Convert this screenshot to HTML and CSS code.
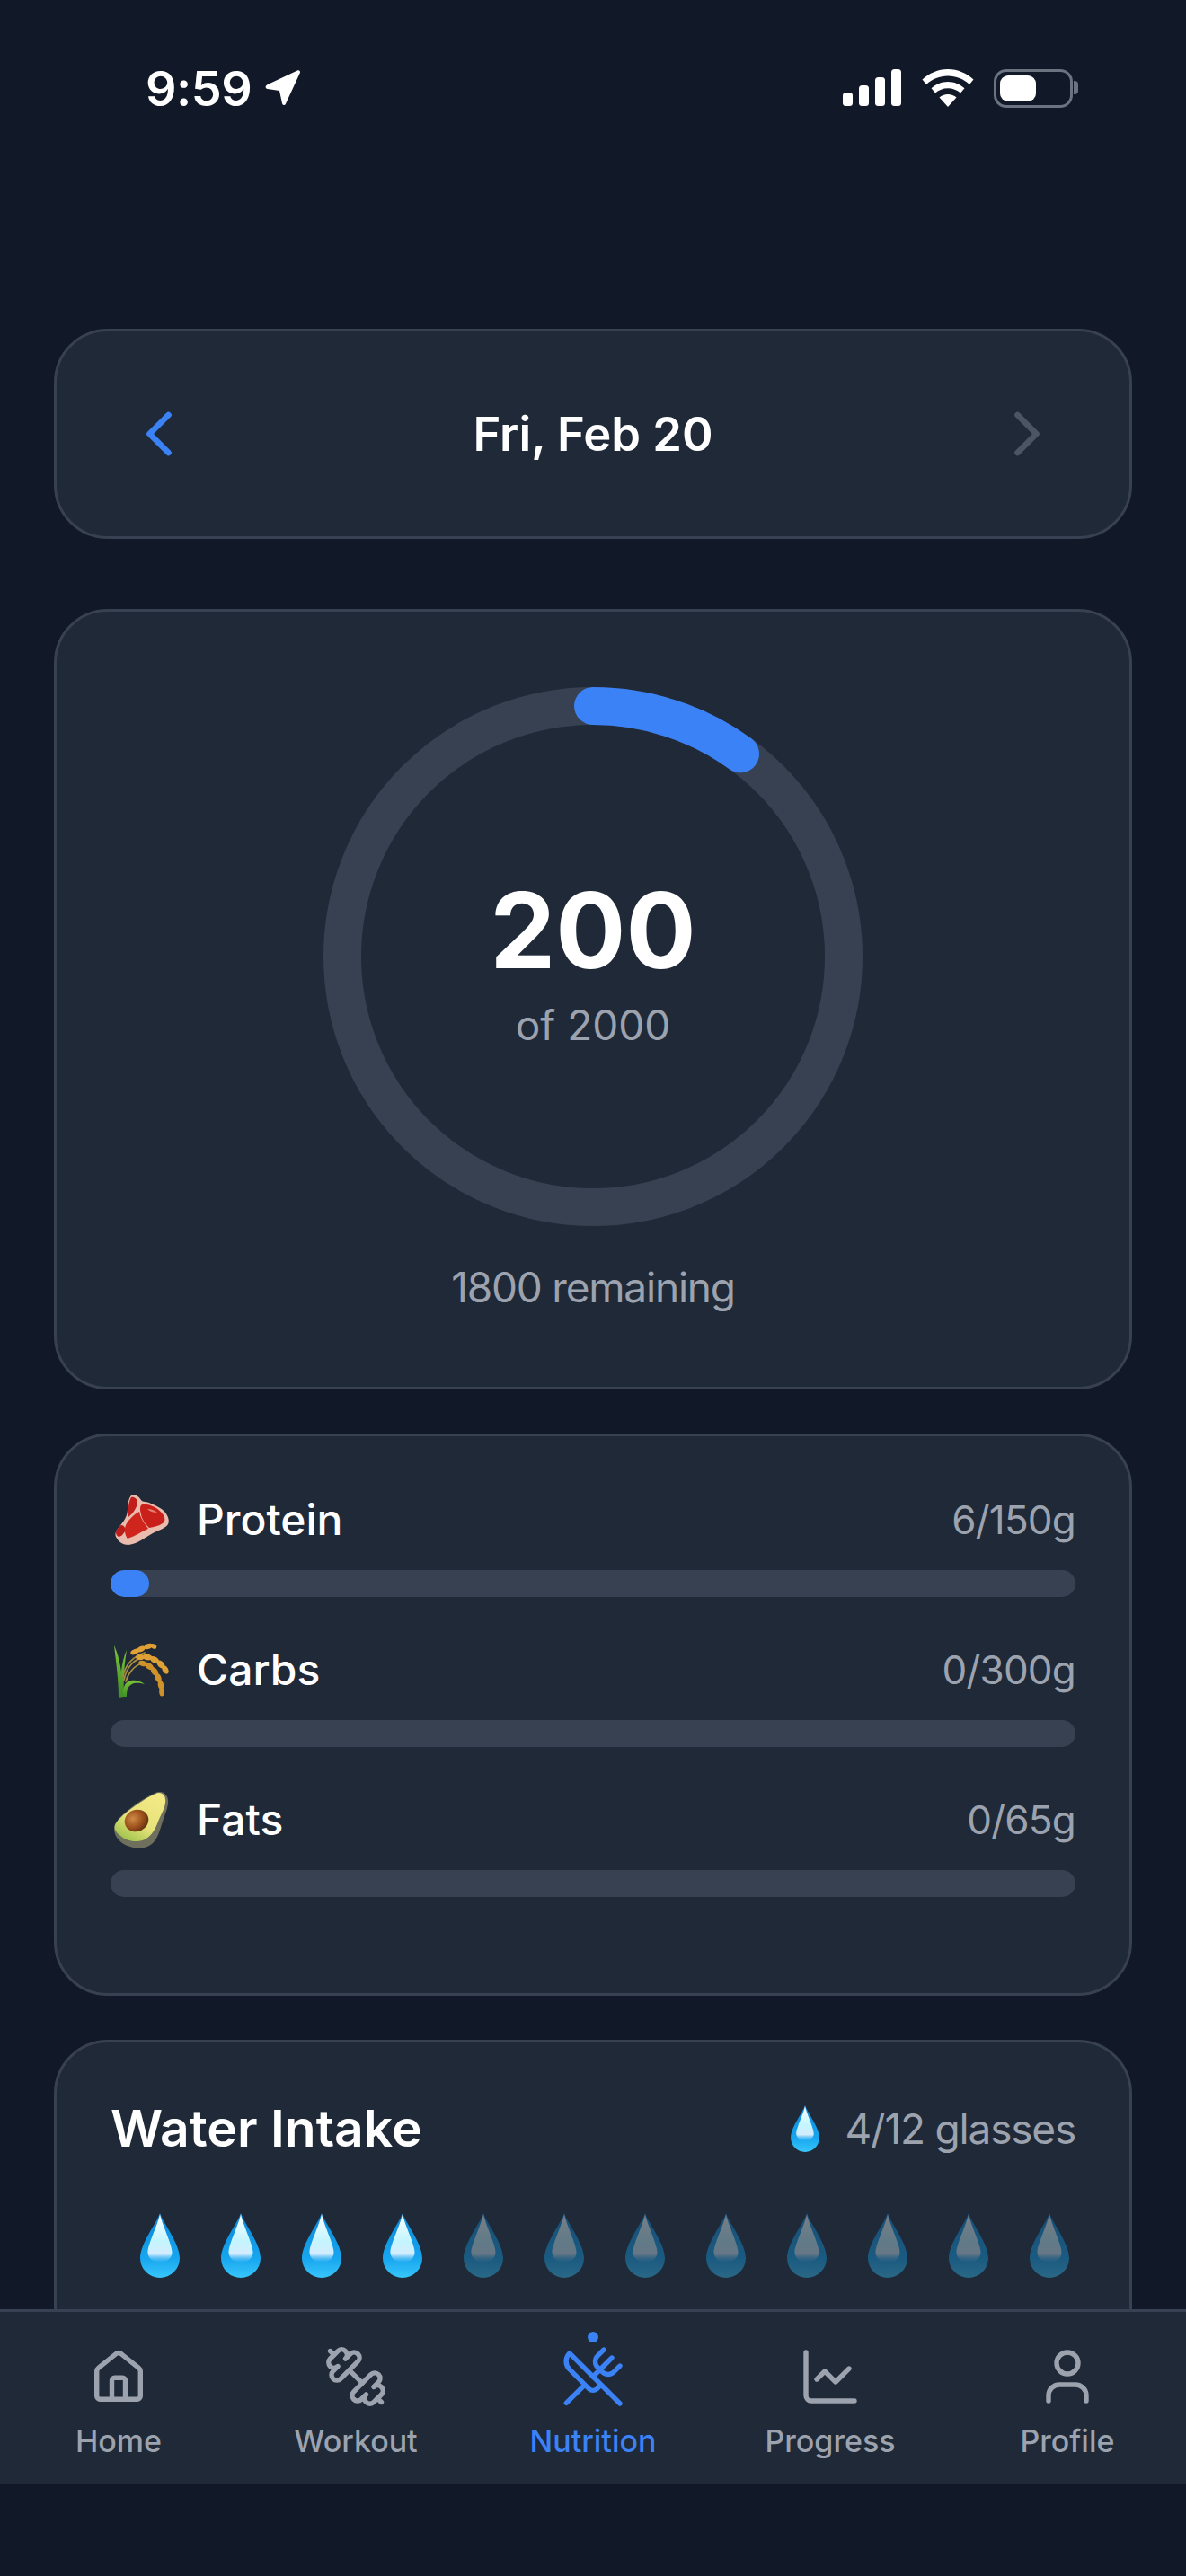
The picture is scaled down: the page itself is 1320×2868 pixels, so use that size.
FILE: index.html
```html
<!DOCTYPE html>
<html lang="en">
<head>
    <meta charset="UTF-8">
    <title>Nutrition</title>
    <link rel="stylesheet" href="styles.css">
</head>
<body>
    <svg class="defs" width="0" height="0">
        <defs>
            <linearGradient id="dropBody" x1="0" y1="0" x2="0" y2="1">
                <stop offset="0" stop-color="#0a86d8"/>
                <stop offset="0.7" stop-color="#17a6ef"/>
                <stop offset="1" stop-color="#38c6fc"/>
            </linearGradient>
            <linearGradient id="dropShine" x1="0" y1="0" x2="0" y2="1">
                <stop offset="0" stop-color="#ffffff"/>
                <stop offset="0.55" stop-color="#c4f5ff"/>
                <stop offset="0.82" stop-color="#d3ecfd"/>
                <stop offset="1" stop-color="#6cc8f7" stop-opacity="0"/>
            </linearGradient>
            <linearGradient id="leaf" x1="0" y1="0" x2="0" y2="1">
                <stop offset="0" stop-color="#7cc23a"/>
                <stop offset="1" stop-color="#3f8f24"/>
            </linearGradient>
            <linearGradient id="avoFlesh" x1="0.8" y1="0" x2="0.2" y2="1">
                <stop offset="0" stop-color="#f4ea86"/>
                <stop offset="0.6" stop-color="#e6e27a"/>
                <stop offset="1" stop-color="#9cc24a"/>
            </linearGradient>
            <radialGradient id="avoPit" cx="0.4" cy="0.35" r="0.7">
                <stop offset="0" stop-color="#d08a45"/>
                <stop offset="0.6" stop-color="#9a4f1c"/>
                <stop offset="1" stop-color="#5c2d10"/>
            </radialGradient>
            <symbol id="drop" viewBox="0 0 44 72">
                <path d="M22 0C25 10 44 34 44 50a22 22 0 0 1-44 0C0 34 19 10 22 0Z" fill="url(#dropBody)"/>
                <path d="M22 1C24 12 36 36 35.500 44c-.4 7-7 11-13.500 11S9 51 8.500 44C8 36 20 12 22 1Z" fill="url(#dropShine)"/>
            </symbol>
        </defs>
    </svg>

    <div class="screen">
        <div class="status">
            <div class="status-left">
                <span class="time">9:59</span>
                <svg width="42" height="42" viewBox="0 0 42 42"><path d="M4 17 37 1.500c2-.9 3.700.8 2.800 2.800L24 38.500c-1 2.200-3.600 2-4-.4L17 24 3.800 22C1 21.500.8 18.500 4 17Z" fill="#fff"/></svg>
            </div>
            <div class="status-right">
                <svg width="66" height="42" viewBox="0 0 66 42" fill="#fff">
                    <rect x="0" y="26" width="11" height="15" rx="3.500"/>
                    <rect x="18" y="18" width="11" height="23" rx="3.500"/>
                    <rect x="36" y="9" width="11" height="32" rx="3.500"/>
                    <rect x="54" y="0" width="11" height="41" rx="3.500"/>
                </svg>
                <svg width="58" height="42" viewBox="0 0 58 42" fill="#fff">
                    <path d="M29 0c11 0 21 4.500 28.500 11.500L53 17C46.500 11 38 7.500 29 7.500S11.500 11 5 17L.5 11.500C8 4.500 18 0 29 0Z"/>
                    <path d="M29 14c7 0 13.500 2.800 18.500 7.300L43 26.500c-3.700-3.200-8.700-5.200-14-5.200s-10.300 2-14 5.200l-4.500-5.200C15.500 16.800 22 14 29 14Z"/>
                    <path d="M29 28c3.700 0 7 1.300 9.500 3.500L29 42 19.500 31.500C22 29.300 25.300 28 29 28Z"/>
                </svg>
                <div class="battery"><div class="battery-level"></div></div>
            </div>
        </div>

        <main class="content">
            <section class="card date-card">
                <svg class="chevron chevron-on" width="84" height="84" viewBox="0 0 24 24"><path d="m15 18-6-6 6-6"/></svg>
                <h2 class="date">Fri, Feb 20</h2>
                <svg class="chevron chevron-off" width="84" height="84" viewBox="0 0 24 24"><path d="m9 18 6-6-6-6"/></svg>
            </section>

            <section class="card calorie-card">
                <div class="ring">
                    <svg width="600" height="600" viewBox="0 0 600 600">
                        <circle class="ring-track" cx="300" cy="300" r="279"/>
                        <path class="ring-value" d="M300 21A279 279 0 0 1 464 74.300"/>
                    </svg>
                    <div class="ring-text">
                        <div class="cal-value">200</div>
                        <div class="cal-total">of 2000</div>
                    </div>
                </div>
                <div class="cal-left">1800 remaining</div>
            </section>

            <section class="card macro-card">
                <div class="macro">
                    <div class="macro-head">
                        <div class="macro-name">
                            <svg width="66" height="66" viewBox="0 0 66 66">
                                <path d="M25 5c4 0 7 3 9 6 2 3 6 1 11 4 5 2 12 5 16 10 3 4 5 9 3 13-3 5-10 6-17 10-9 5-17 12-27 13-6 0-11-3-14-9-2-5 2-9 6-14 4-5 7-10 7-17 0-6 2-16 6-16Z" fill="#e9bcae"/>
                                <path d="M23 8c3-1 7 2 7 5 0 6-5 13-10 17-1-7 0-17 3-22Z" fill="#c11d1a"/>
                                <path d="M35 16c8-1 19 4 24 12 2 4 2 7-1 9-4 3-10 4-15 5-4-4-8-9-9-15-1-4-2-9 1-11Z" fill="#c9201b"/>
                                <path d="M32 24c1 7 6 13 10 19-7 3-14 8-23 11-3-4-4-10-2-15 3-6 9-12 15-15Z" fill="#cf251d"/>
                                <path d="M12 39c3 0 5 3 4 7-1 2-4 6-7 6-2-1-3-3-3-5 1-3 4-8 6-8Z" fill="#bc1d19"/>
                                <path d="M41 21c5 0 9 2 11 4-4 0-8-1-11-4Z" fill="#e37f73"/>
                            </svg>
                            <span>Protein</span>
                        </div>
                        <span class="macro-amount">6/150g</span>
                    </div>
                    <div class="track"><div class="fill" style="width: 4%"></div></div>
                </div>
                <div class="macro">
                    <div class="macro-head">
                        <div class="macro-name">
                            <svg width="66" height="66" viewBox="0 0 66 66">
                                <path d="M4 6c4 8 9 24 11 57l-6 1C9 44 6 24 4 6Z" fill="url(#leaf)"/>
                                <path d="M18 11c-1 8-4 22-3 52l-3-1c-2-18 0-38 6-51Z" fill="url(#leaf)"/>
                                <path d="M14 63c-1-10 2-17 9-18 6-1 11 1 15 4-5-1-10-2-14 0-5 2-6 8-6 14Z" fill="url(#leaf)"/>
                                <g fill="none" stroke="#a58d3e" stroke-linecap="round" stroke-width="1.800">
                                    <path d="M14 40c3-14 12-22 24-26"/>
                                    <path d="M15 44c3-14 12-24 22-24"/>
                                    <path d="M17 46c3-10 10-18 18-20"/>
                                </g>
                                <g fill="#dfa136">
                                    <ellipse cx="27" cy="13" rx="5" ry="2.800" transform="rotate(-25 27 13)"/>
                                    <ellipse cx="34" cy="10" rx="5" ry="3" transform="rotate(-25 34 10)"/>
                                    <ellipse cx="42" cy="7" rx="5" ry="3" transform="rotate(-20 42 7)"/>
                                    <ellipse cx="48" cy="7" rx="3.500" ry="2.500" transform="rotate(30 48 7)"/>
                                    <ellipse cx="33" cy="19" rx="5" ry="3.200"/>
                                    <ellipse cx="41" cy="19" rx="5.500" ry="3.400" transform="rotate(10 41 19)"/>
                                    <ellipse cx="49" cy="22" rx="5.500" ry="3.400" transform="rotate(30 49 22)"/>
                                    <ellipse cx="56" cy="27" rx="5.500" ry="3.400" transform="rotate(45 56 27)"/>
                                    <ellipse cx="61" cy="33" rx="5" ry="3.200" transform="rotate(60 61 33)"/>
                                </g>
                                <g fill="#cf9129">
                                    <ellipse cx="36" cy="26" rx="5" ry="3.200" transform="rotate(15 36 26)"/>
                                    <ellipse cx="43" cy="29" rx="5.500" ry="3.400" transform="rotate(35 43 29)"/>
                                    <ellipse cx="49" cy="35" rx="5.500" ry="3.400" transform="rotate(55 49 35)"/>
                                    <ellipse cx="53" cy="42" rx="5.500" ry="3.400" transform="rotate(68 53 42)"/>
                                    <ellipse cx="56" cy="50" rx="5.500" ry="3.200" transform="rotate(78 56 50)"/>
                                    <ellipse cx="57" cy="58" rx="4.500" ry="2.800" transform="rotate(85 57 58)"/>
                                </g>
                            </svg>
                            <span>Carbs</span>
                        </div>
                        <span class="macro-amount">0/300g</span>
                    </div>
                    <div class="track"></div>
                </div>
                <div class="macro">
                    <div class="macro-head">
                        <div class="macro-name">
                            <svg width="66" height="66" viewBox="0 0 66 66">
                                <path d="M55 2c6 0 10 6 9 13-1 8-4 13-6 20-3 9-5 19-12 25-6 5-16 6-24 3C11 60 4 52 4 43c0-6 5-11 10-16C24 18 34 11 44 6c4-2 7-4 11-4Z" fill="#6f6f5e"/>
                                <path d="M54 3c5 0 8 5 7 11-1 8-5 13-8 21-3 8-7 16-15 20-9 4-21 2-28-5C5 46 3 42 6 37c3-5 9-10 14-14C29 16 38 10 46 6c3-1 5-3 8-3Z" fill="url(#avoFlesh)"/>
                                <ellipse cx="29" cy="34" rx="13.500" ry="12" transform="rotate(-25 29 34)" fill="url(#avoPit)"/>
                            </svg>
                            <span>Fats</span>
                        </div>
                        <span class="macro-amount">0/65g</span>
                    </div>
                    <div class="track"></div>
                </div>
            </section>

            <section class="card water-card">
                <div class="water-head">
                    <h2 class="water-title">Water Intake</h2>
                    <div class="water-count">
                        <svg width="32" height="52"><use href="#drop"/></svg>
                        <span>4/12 glasses</span>
                    </div>
                </div>
                <div class="drops">
                    <svg class="drop" width="44" height="72"><use href="#drop"/></svg>
                    <svg class="drop" width="44" height="72"><use href="#drop"/></svg>
                    <svg class="drop" width="44" height="72"><use href="#drop"/></svg>
                    <svg class="drop" width="44" height="72"><use href="#drop"/></svg>
                    <svg class="drop empty" width="44" height="72"><use href="#drop"/></svg>
                    <svg class="drop empty" width="44" height="72"><use href="#drop"/></svg>
                    <svg class="drop empty" width="44" height="72"><use href="#drop"/></svg>
                    <svg class="drop empty" width="44" height="72"><use href="#drop"/></svg>
                    <svg class="drop empty" width="44" height="72"><use href="#drop"/></svg>
                    <svg class="drop empty" width="44" height="72"><use href="#drop"/></svg>
                    <svg class="drop empty" width="44" height="72"><use href="#drop"/></svg>
                    <svg class="drop empty" width="44" height="72"><use href="#drop"/></svg>
                </div>
            </section>
        </main>

        <nav class="tabs">
            <a class="tab">
                <svg class="tab-icon" viewBox="0 0 24 24">
                    <path d="M3.900 10a1.500 1.500 0 0 1 .6-1.200l6.600-5.300a1.500 1.500 0 0 1 1.800 0l6.600 5.300a1.500 1.500 0 0 1 .6 1.200v9.200a1.200 1.200 0 0 1-1.200 1.200H5.100a1.200 1.200 0 0 1-1.200-1.200Z"/>
                    <path d="M9.500 20.400v-7a1 1 0 0 1 1-1h3a1 1 0 0 1 1 1v7"/>
                </svg>
                <span>Home</span>
            </a>
            <a class="tab">
                <svg class="tab-icon" viewBox="0 0 24 24">
                    <g transform="translate(24 0) scale(-1 1)">
                        <path d="M17.596 12.768a2 2 0 1 0 2.829-2.829l-1.768-1.767a2 2 0 0 0 2.828-2.829l-2.828-2.828a2 2 0 0 0-2.829 2.828l-1.767-1.768a2 2 0 1 0-2.829 2.829z"/>
                        <path d="m2.500 21.500 1.400-1.400"/>
                        <path d="m20.100 3.900 1.400-1.400"/>
                        <path d="M5.343 21.485a2 2 0 1 0 2.829-2.828l1.767 1.768a2 2 0 1 0 2.829-2.829l-6.364-6.364a2 2 0 1 0-2.829 2.829l1.768 1.767a2 2 0 0 0-2.828 2.829z"/>
                        <path d="m9.600 14.400 4.800-4.800"/>
                    </g>
                </svg>
                <span>Workout</span>
            </a>
            <a class="tab active">
                <i class="tab-dot"></i>
                <svg class="tab-icon" viewBox="0 0 24 24">
                    <path d="m16 2-2.300 2.300a3 3 0 0 0 0 4.200l1.800 1.800a3 3 0 0 0 4.200 0L22 8"/>
                    <path d="M15 15 3.300 3.300a4.200 4.200 0 0 0 0 6l7.300 7.300c.7.7 2 .7 2.800 0L15 15Zm0 0 7 7"/>
                    <path d="m2.100 21.800 6.400-6.300"/>
                    <path d="m19 5-7 7"/>
                </svg>
                <span>Nutrition</span>
            </a>
            <a class="tab">
                <svg class="tab-icon" viewBox="0 0 24 24">
                    <path d="M3 3v16a2 2 0 0 0 2 2h16"/>
                    <path d="m19 9-5 5-4-4-3 3"/>
                </svg>
                <span>Progress</span>
            </a>
            <a class="tab">
                <svg class="tab-icon" viewBox="0 0 24 24">
                    <path d="M19 21v-2a4 4 0 0 0-4-4H9a4 4 0 0 0-4 4v2"/>
                    <circle cx="12" cy="7" r="4"/>
                </svg>
                <span>Profile</span>
            </a>
        </nav>
    </div>
</body>
</html>
```

FILE: styles.css
```css
*{
    margin: 0;
    padding: 0;
    box-sizing: border-box;
    font-family: Inter, "Noto Sans", sans-serif;
}
html, body{
    height: 100%;
    overflow: hidden;
    background-color: #111827;
}
.defs{
    position: absolute;
}
.screen{
    height: 2868px;
    display: flex;
    flex-direction: column;
    color: #fff;
}

/* status bar */
.status{
    height: 196px;
    flex-shrink: 0;
    display: flex;
    align-items: center;
    justify-content: space-between;
    padding: 0 126px 0 162px;
}
.status-left{
    display: flex;
    align-items: center;
    gap: 14px;
}
.time{
    font-size: 54px;
    font-weight: 600;
    letter-spacing: -0.5px;
}
.status-right{
    display: flex;
    align-items: center;
    gap: 22px;
}
.battery{
    position: relative;
    width: 88px;
    height: 43px;
    border: 3px solid #6b7280;
    border-radius: 14px;
    padding: 4px;
}
.battery::after{
    content: "";
    position: absolute;
    right: -9px;
    top: 10px;
    width: 5px;
    height: 15px;
    background: #6b7280;
    border-radius: 0 4px 4px 0;
}
.battery-level{
    width: 40px;
    height: 100%;
    background: #fff;
    border-radius: 9px;
}

/* cards */
.content{
    flex: 1;
    min-height: 0;
    overflow: hidden;
    padding: 170px 60px 0;
    display: flex;
    flex-direction: column;
}
.card{
    flex-shrink: 0;
    background: #1f2937;
    border: 3px solid #374151;
    border-radius: 60px;
}
.date-card{
    height: 234px;
    display: flex;
    align-items: center;
    justify-content: space-between;
    padding: 0 72px;
    margin-bottom: 78px;
}
.date{
    font-size: 52.500px;
    font-weight: 600;
}
.chevron{
    fill: none;
    stroke-width: 1.900;
    stroke-linecap: round;
    stroke-linejoin: round;
}
.chevron-on{
    stroke: #3b82f6;
}
.chevron-off{
    stroke: #4b5563;
}

.calorie-card{
    height: 869px;
    padding-top: 84px;
    display: flex;
    flex-direction: column;
    align-items: center;
    margin-bottom: 49px;
}
.ring{
    position: relative;
    width: 600px;
    height: 600px;
}
.ring svg{
    display: block;
    fill: none;
    stroke-width: 42;
}
.ring-track{
    stroke: #374151;
}
.ring-value{
    stroke: #3b82f6;
    stroke-linecap: round;
}
.ring-text{
    position: absolute;
    inset: 0;
    padding-top: 22px;
    display: flex;
    flex-direction: column;
    align-items: center;
    justify-content: center;
}
.cal-value{
    font-size: 116px;
    font-weight: 700;
    line-height: 120px;
}
.cal-total{
    margin-top: 9px;
    font-size: 46px;
    line-height: 72px;
    color: #9ca3af;
}
.cal-left{
    margin-top: 32px;
    font-size: 46px;
    letter-spacing: -1.2px;
    line-height: 72px;
    color: #9ca3af;
}

.macro-card{
    height: 626px;
    padding: 60px;
    margin-bottom: 49px;
}
.macro{
    margin-bottom: 48px;
}
.macro-head{
    height: 65px;
    margin-bottom: 24px;
    display: flex;
    align-items: center;
    justify-content: space-between;
}
.macro-name{
    display: flex;
    align-items: center;
    gap: 30px;
    font-size: 48px;
    font-weight: 500;
}
.macro-amount{
    font-size: 44px;
    letter-spacing: -0.8px;
    color: #9ca3af;
}
.track{
    height: 30px;
    background: #374151;
    border-radius: 15px;
    overflow: hidden;
}
.fill{
    height: 100%;
    background: #3b82f6;
    border-radius: 15px;
}

.water-card{
    padding: 60px;
    height: 700px;
}
.water-head{
    display: flex;
    align-items: center;
    justify-content: space-between;
    margin-bottom: 58px;
}
.water-title{
    font-size: 57px;
    font-weight: 600;
    line-height: 72px;
}
.water-count{
    display: flex;
    align-items: center;
    gap: 29px;
    font-size: 46px;
    letter-spacing: -1.2px;
    color: #9ca3af;
}
.drops{
    display: flex;
    gap: 46px;
    padding-left: 33px;
}
.drop{
    flex-shrink: 0;
}
.drop.empty{
    opacity: 0.4;
}

/* bottom tabs */
.tabs{
    height: 195px;
    flex-shrink: 0;
    margin-bottom: 102px;
    background: #1f2937;
    border-top: 3px solid #374151;
    display: grid;
    grid-template-columns: repeat(5, 1fr);
}
.tab{
    position: relative;
    display: flex;
    flex-direction: column;
    align-items: center;
    padding-top: 36px;
    gap: 9px;
    font-size: 34px;
    font-weight: 500;
    line-height: 54px;
    color: #9ca3af;
}
.tab-icon{
    width: 72px;
    height: 72px;
    fill: none;
    stroke: currentColor;
    stroke-width: 1.800;
    stroke-linecap: round;
    stroke-linejoin: round;
}
.tab.active{
    color: #3b82f6;
}
.tab-dot{
    position: absolute;
    top: 22px;
    left: 50%;
    margin-left: -6px;
    width: 12px;
    height: 12px;
    border-radius: 50%;
    background: #3b82f6;
}
```
